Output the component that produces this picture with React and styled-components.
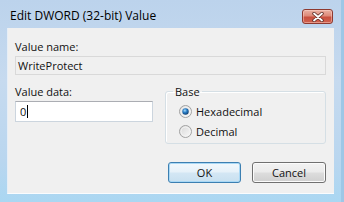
import React from "react";
import styled, { createGlobalStyle } from "styled-components";

const Global = createGlobalStyle`
  html, body { margin: 0; padding: 0; }
  body { width: 344px; height: 202px; overflow: hidden; font-family: "Open Sans", "Noto Sans", sans-serif; }
`;

const Window = styled.div`
  width: 344px;
  height: 202px;
  box-sizing: border-box;
  display: flex;
  flex-direction: column;
  background: linear-gradient(180deg, #bcd3ec 0%, #c6daef 40%, #b9d6ef 80%, #aad7f2 100%);
  box-shadow: inset -3px 0 0 #9ec7e6;
`;

const TitleBar = styled.div`
  height: 28px;
  box-sizing: border-box;
  display: flex;
  align-items: flex-start;
  justify-content: space-between;
  padding: 9px 11px 0 10px;
`;

const Title = styled.div`
  font-size: 12px;
  line-height: 15px;
  color: #000;
  margin-top: -1px;
`;

const CloseButton = styled.div`
  width: 31px;
  height: 15px;
  box-sizing: border-box;
  border: 1px solid #8e3a30;
  border-radius: 3px;
  background: linear-gradient(180deg, #eab1a3 0%, #de8a79 45%, #c9503f 55%, #d0624f 100%);
  box-shadow: inset 0 0 0 1px rgba(255, 220, 210, 0.45);
  display: flex;
  align-items: center;
  justify-content: center;
`;

const Client = styled.div`
  flex: 1;
  margin: 0 10px 8px 7px;
  background: #f0f0f0;
  border-left: 1px solid #e6eef7;
  border-bottom: 1px solid #fafcfe;
  padding: 11px 7px 0 7px;
  display: flex;
  flex-direction: column;
`;

const Label = styled.div`
  font-size: 11px;
  line-height: 15px;
  color: #111;
`;

const NameBox = styled.div`
  margin-top: 2px;
  height: 19px;
  box-sizing: border-box;
  width: 311px;
  border: 1px solid #d9d9d9;
  background: #f0f0f0;
  font-size: 11px;
  line-height: 17px;
  padding-left: 2px;
  color: #111;
`;

const Row = styled.div`
  display: flex;
  gap: 12px;
  margin-top: 9px;
  width: 311px;
`;

const LeftCol = styled.div`
  width: 138px;
  display: flex;
  flex-direction: column;
`;

const DataBox = styled.div`
  margin-top: 2px;
  height: 21px;
  box-sizing: border-box;
  border: 1px solid #ccd5de;
  border-top-color: #abadb3;
  background: #fff;
  font-size: 11px;
  line-height: 19px;
  padding-left: 4px;
  color: #111;
  display: flex;
  align-items: center;
`;

const Caret = styled.span`
  display: inline-block;
  width: 1px;
  height: 13px;
  background: #000;
  margin-left: 1px;
`;

const Group = styled.fieldset`
  flex: 1;
  margin: 0;
  padding: 2px 0 2px 13px;
  border: 1px solid #d5dfe5;
  border-radius: 3px;
  box-shadow: inset 1px 1px 0 #fff;
  min-width: 0;
`;

const Legend = styled.legend`
  font-size: 11px;
  line-height: 15px;
  padding: 0 2px;
  margin-left: -6px;
  color: #111;
`;

const RadioRow = styled.div`
  height: 20px;
  display: flex;
  align-items: center;
  gap: 4px;
  font-size: 11px;
  color: #111;
`;

const Footer = styled.div`
  display: flex;
  justify-content: flex-end;
  gap: 11px;
  margin-top: 18px;
  width: 311px;
`;

const Button = styled.div`
  width: ${(p) => (p.$wide ? 74 : 73)}px;
  height: 21px;
  box-sizing: border-box;
  border-radius: 3px;
  border: 1px solid ${(p) => (p.$default ? "#3c7fb1" : "#707070")};
  background: ${(p) =>
    p.$default
      ? "linear-gradient(180deg, #f2f8fc 0%, #e6f1f9 48%, #d4e7f4 52%, #c8e0f0 100%)"
      : "linear-gradient(180deg, #f2f2f2 0%, #ebebeb 48%, #dddddd 52%, #cfcfcf 100%)"};
  box-shadow: inset 0 0 0 1px ${(p) => (p.$default ? "#a9d8f5" : "#fbfbfb")};
  font-size: 11px;
  line-height: 19px;
  text-align: center;
  color: #111;
`;

const Radio = ({ checked }) => (
  <svg width="13" height="13" viewBox="0 0 13 13">
    <defs>
      <linearGradient id={checked ? "rg1" : "rg0"} x1="0" y1="0" x2="1" y2="1">
        <stop offset="0" stopColor="#d6d6d6" />
        <stop offset="1" stopColor="#fbfbfb" />
      </linearGradient>
      <radialGradient id="dot" cx="0.4" cy="0.35" r="0.7">
        <stop offset="0" stopColor="#a8dcf9" />
        <stop offset="0.45" stopColor="#2a7ec7" />
        <stop offset="1" stopColor="#0d3a6a" />
      </radialGradient>
    </defs>
    <circle cx="6.5" cy="6.5" r="6" fill={`url(#${checked ? "rg1" : "rg0"})`} stroke="#a2a2a2" strokeWidth="1" />
    <circle cx="6.5" cy="6.5" r="4.5" fill="none" stroke="#f4f4f4" strokeWidth="1" />
    {checked && <circle cx="6.5" cy="6.5" r="3.2" fill="url(#dot)" />}
  </svg>
);

const CloseGlyph = () => (
  <svg width="12" height="10" viewBox="0 0 12 10">
    <path d="M2 1.5 L10 8.5 M10 1.5 L2 8.5" stroke="#5a2a24" strokeWidth="3.4" strokeLinecap="round" />
    <path d="M2 1.5 L10 8.5 M10 1.5 L2 8.5" stroke="#ffffff" strokeWidth="1.8" strokeLinecap="round" />
  </svg>
);

export default function App() {
  return (
    <>
      <Global />
      <Window>
        <TitleBar>
          <Title>Edit DWORD (32-bit) Value</Title>
          <CloseButton>
            <CloseGlyph />
          </CloseButton>
        </TitleBar>
        <Client>
          <Label>Value name:</Label>
          <NameBox>WriteProtect</NameBox>
          <Row>
            <LeftCol>
              <Label>Value data:</Label>
              <DataBox>
                0<Caret />
              </DataBox>
            </LeftCol>
            <Group>
              <Legend>Base</Legend>
              <RadioRow>
                <Radio checked />
                Hexadecimal
              </RadioRow>
              <RadioRow>
                <Radio />
                Decimal
              </RadioRow>
            </Group>
          </Row>
          <Footer>
            <Button $default>OK</Button>
            <Button $wide>Cancel</Button>
          </Footer>
        </Client>
      </Window>
    </>
  );
}
